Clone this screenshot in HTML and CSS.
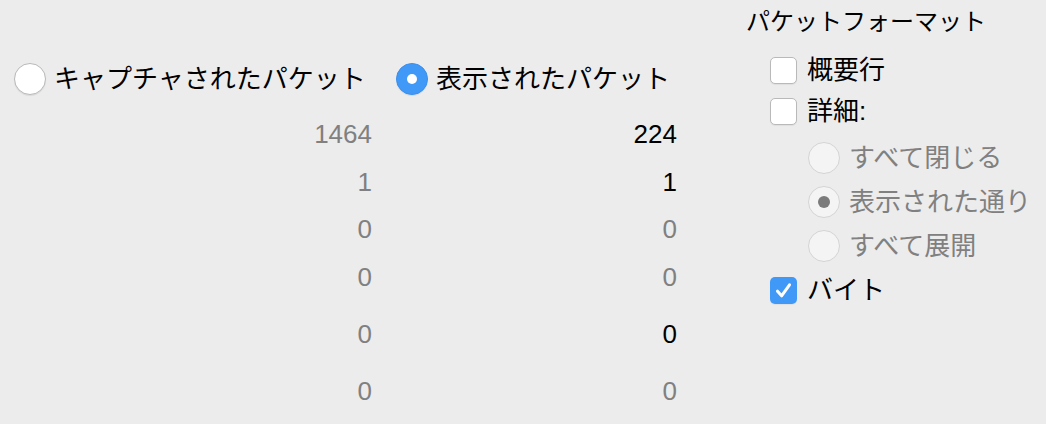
FILE: index.html
```html
<!DOCTYPE html>
<html lang="ja">
<head>
<meta charset="utf-8">
<link rel="stylesheet" href="styles.css">
</head>
<body>
<div class="page">
  <div class="counts">
    <div class="col col-captured">
      <label class="choice">
        <span class="radio"></span>
        <span class="label">キャプチャされたパケット</span>
      </label>
      <div class="num gray">1464</div>
      <div class="num gray">1</div>
      <div class="num gray">0</div>
      <div class="num gray">0</div>
      <div class="num gray spaced">0</div>
      <div class="num gray spaced2">0</div>
    </div>
    <div class="col col-displayed">
      <label class="choice">
        <span class="radio on"></span>
        <span class="label">表示されたパケット</span>
      </label>
      <div class="num">224</div>
      <div class="num">1</div>
      <div class="num gray">0</div>
      <div class="num gray">0</div>
      <div class="num spaced">0</div>
      <div class="num gray spaced2">0</div>
    </div>
  </div>
  <div class="format">
    <div class="fmt-title">パケットフォーマット</div>
    <div class="fmt-row">
      <span class="check"></span><span class="label">概要行</span>
    </div>
    <div class="fmt-row tight">
      <span class="check"></span><span class="label">詳細:</span>
    </div>
    <div class="fmt-row sub first">
      <span class="radio dis"></span><span class="label gray">すべて閉じる</span>
    </div>
    <div class="fmt-row sub">
      <span class="radio dis dot"></span><span class="label gray">表示された通り</span>
    </div>
    <div class="fmt-row sub">
      <span class="radio dis"></span><span class="label gray">すべて展開</span>
    </div>
    <div class="fmt-row">
      <span class="check on">
        <svg viewBox="0 0 27 27" width="27" height="27"><path d="M7.5 14.2 L11.6 18.8 L19.5 7.8" fill="none" stroke="#fff" stroke-width="3" stroke-linecap="round" stroke-linejoin="round"/></svg>
      </span><span class="label">バイト</span>
    </div>
  </div>
</div>
</body>
</html>
```

FILE: styles.css
```css
html, body {
  margin: 0;
  padding: 0;
  background: #ececec;
}
body {
  width: 1046px;
  height: 424px;
  overflow: hidden;
  font-family: "Liberation Sans", "Noto Sans CJK JP", sans-serif;
  color: #000;
}
.page {
  display: flex;
}
.counts {
  display: flex;
  gap: 24px;
  padding-top: 63px;
  padding-left: 14px;
}
.col {
  display: flex;
  flex-direction: column;
}
.col-captured { width: 358px; }
.col-displayed { width: 281px; }

.choice {
  display: flex;
  align-items: center;
  gap: 8px;
  height: 32px;
  margin-bottom: 16px;
  white-space: nowrap;
}
.label {
  font-size: 26px;
  line-height: 32px;
  white-space: nowrap;
}
.gray { color: #808080; }

.radio {
  box-sizing: border-box;
  width: 32px;
  height: 32px;
  flex: none;
  border-radius: 50%;
  background: #fff;
  border: 1px solid #b9b9b9;
  box-shadow: 0 1px 1px rgba(0,0,0,0.08);
  display: flex;
  align-items: center;
  justify-content: center;
}
.radio.on {
  background: #4199f7;
  border-color: #3a8ff0;
}
.radio.on::after {
  content: "";
  width: 10px;
  height: 10px;
  border-radius: 50%;
  background: #fff;
}
.radio.dis {
  background: #f4f4f4;
  border-color: #d4d4d4;
  box-shadow: none;
}
.radio.dot::after {
  content: "";
  width: 12px;
  height: 12px;
  border-radius: 50%;
  background: #7b7b7b;
}

.num {
  height: 47.5px;
  line-height: 47.5px;
  font-size: 26px;
  text-align: right;
}
.num.spaced { margin-top: 10px; }
.num.spaced2 { margin-top: 9.5px; }

.format {
  margin-left: 69px;
  display: flex;
  flex-direction: column;
}
.fmt-title {
  font-size: 24px;
  height: 48px;
  line-height: 44px;
  white-space: nowrap;
}
.fmt-row {
  display: flex;
  align-items: center;
  gap: 10px;
  height: 44px;
  padding-left: 24px;
}
.fmt-row.tight { height: 38px; }
.fmt-row.sub {
  padding-left: 62px;
  gap: 9px;
}
.fmt-row.sub.first { margin-top: 6px; }
.check {
  box-sizing: border-box;
  width: 27px;
  height: 27px;
  flex: none;
  border-radius: 5px;
  background: #fff;
  border: 1px solid #b9b9b9;
  box-shadow: 0 1px 1px rgba(0,0,0,0.06);
  display: flex;
}
.check.on {
  background: #4199f7;
  border: none;
}
.check svg { display: block; }
```
